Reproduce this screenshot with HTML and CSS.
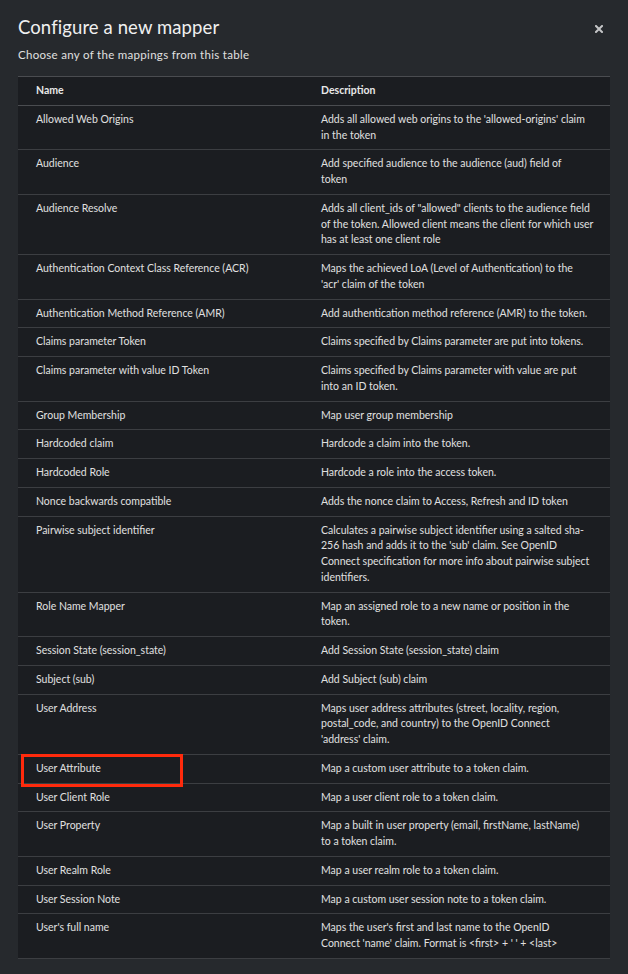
FILE: index.html
```html
<!DOCTYPE html>
<html lang="en">
<head>
<meta charset="utf-8">
<title>Configure a new mapper</title>
<link rel="stylesheet" href="styles.css">
</head>
<body>
<div class="modal">
  <header class="modal-header">
    <div class="title-row">
      <h1 class="title">Configure a new mapper</h1>
      <button class="close" aria-label="Close">
        <svg viewBox="0 0 8 8" width="8" height="8"><path d="M1 1 L7 7 M7 1 L1 7" stroke="#c4c5c7" stroke-width="2" stroke-linecap="square"/></svg>
      </button>
    </div>
    <p class="subtitle">Choose any of the mappings from this table</p>
  </header>
  <table class="table">
    <thead>
      <tr><th class="col-name">Name</th><th class="col-desc">Description</th></tr>
    </thead>
    <tbody>
      <tr><td>Allowed Web Origins</td><td>Adds all allowed web origins to the 'allowed-origins' claim in the token</td></tr>
      <tr><td>Audience</td><td>Add specified audience to the audience (aud) field of<br>token</td></tr>
      <tr><td>Audience Resolve</td><td>Adds all client_ids of "allowed" clients to the audience field of the token. Allowed client means the client for which user has at least one client role</td></tr>
      <tr><td>Authentication Context Class Reference (ACR)</td><td>Maps the achieved LoA (Level of Authentication) to the<br>'acr' claim of the token</td></tr>
      <tr><td>Authentication Method Reference (AMR)</td><td>Add authentication method reference (AMR) to the token.</td></tr>
      <tr><td>Claims parameter Token</td><td>Claims specified by Claims parameter are put into tokens.</td></tr>
      <tr><td>Claims parameter with value ID Token</td><td>Claims specified by Claims parameter with value are put into an ID token.</td></tr>
      <tr><td>Group Membership</td><td>Map user group membership</td></tr>
      <tr><td>Hardcoded claim</td><td>Hardcode a claim into the token.</td></tr>
      <tr><td>Hardcoded Role</td><td>Hardcode a role into the access token.</td></tr>
      <tr><td>Nonce backwards compatible</td><td>Adds the nonce claim to Access, Refresh and ID token</td></tr>
      <tr><td>Pairwise subject identifier</td><td>Calculates a pairwise subject identifier using a salted sha-256 hash and adds it to the 'sub' claim. See OpenID Connect specification for more info about pairwise subject identifiers.</td></tr>
      <tr><td>Role Name Mapper</td><td>Map an assigned role to a new name or position in the token.</td></tr>
      <tr><td>Session State (session_state)</td><td>Add Session State (session_state) claim</td></tr>
      <tr><td>Subject (sub)</td><td>Add Subject (sub) claim</td></tr>
      <tr><td>User Address</td><td>Maps user address attributes (street, locality, region, postal_code, and country) to the OpenID Connect<br>'address' claim.</td></tr>
      <tr><td><span class="highlight">User Attribute</span></td><td>Map a custom user attribute to a token claim.</td></tr>
      <tr><td>User Client Role</td><td>Map a user client role to a token claim.</td></tr>
      <tr><td>User Property</td><td>Map a built in user property (email, firstName, lastName)<br>to a token claim.</td></tr>
      <tr><td>User Realm Role</td><td>Map a user realm role to a token claim.</td></tr>
      <tr><td>User Session Note</td><td>Map a custom user session note to a token claim.</td></tr>
      <tr><td>User's full name</td><td>Maps the user's first and last name to the OpenID<br>Connect 'name' claim. Format is &lt;first&gt; + ' ' + &lt;last&gt;</td></tr>
    </tbody>
  </table>
</div>
</body>
</html>
```
FILE: styles.css
```css
html, body {
  margin: 0;
  padding: 0;
  background: #26292d;
}
body {
  font-family: Lato, "Liberation Sans", sans-serif;
  color: #e0e0e0;
}
.modal {
  padding: 14px 18px 16px 18px;
}
.title-row {
  display: flex;
  justify-content: space-between;
  align-items: center;
}
.title {
  margin: 0;
  font-size: 18.5px;
  line-height: 26px;
  font-weight: 400;
  letter-spacing: 0.1px;
  color: #f0f0f0;
}
.close {
  background: none;
  border: 0;
  padding: 0;
  margin: 4px 7px 0 0;
  display: flex;
  align-items: center;
  cursor: pointer;
}
.subtitle {
  margin: 7px 0 0 0;
  font-size: 11.5px;
  line-height: 16px;
  letter-spacing: 0.3px;
  color: #e0e0e0;
}
.table {
  margin-top: 13px;
  width: 592px;
  border-collapse: collapse;
  background: #1b1d21;
  font-size: 10.5px;
  line-height: 15.75px;
  table-layout: fixed;
}
.table th {
  text-align: left;
  font-weight: 700;
  padding: 6px 16px 6px 18px;
  border-top: 1px solid #4a4c50;
  border-bottom: 1px solid #4a4c50;
  color: #e8e8e8;
}
.col-name { width: 285px; box-sizing: border-box; }
.table td {
  vertical-align: top;
  padding: 6px 16px 6px 18px;
  border-bottom: 1px solid #3c3e42;
  color: #e0e0e0;
}
.highlight {
  position: relative;
}
.highlight::after {
  content: "";
  position: absolute;
  left: -15px;
  top: -8px;
  width: 156px;
  height: 27px;
  border: 3px solid #ff2a0c;
}
```
